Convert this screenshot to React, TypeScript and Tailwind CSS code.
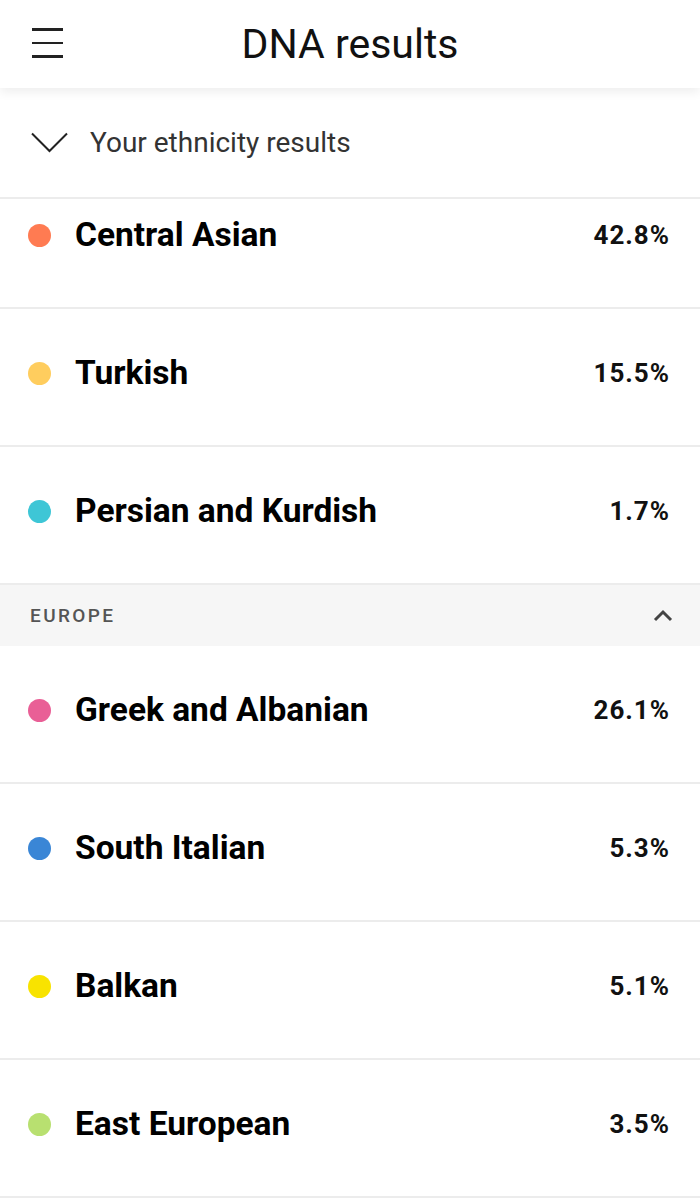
import React from "react";

type Item = { name: string; pct: string; color: string };

const asia: Item[] = [
  { name: "Central Asian", pct: "42.8%", color: "#ff7b52" },
  { name: "Turkish", pct: "15.5%", color: "#ffcd5e" },
  { name: "Persian and Kurdish", pct: "1.7%", color: "#3ec6d6" },
];

const europe: Item[] = [
  { name: "Greek and Albanian", pct: "26.1%", color: "#e95f96" },
  { name: "South Italian", pct: "5.3%", color: "#3a86d6" },
  { name: "Balkan", pct: "5.1%", color: "#f8e300" },
  { name: "East European", pct: "3.5%", color: "#b8e070" },
];

function Row({ item, first }: { item: Item; first?: boolean }) {
  return (
    <div
      className={
        "flex h-[138px] items-center justify-between border-b-2 border-[#ececec] pb-[8px] pl-[28px] pr-[30px]" +
        (first ? " -mt-[28px]" : "")
      }
    >
      <div className="flex items-center">
        <span
          className="block h-[23px] w-[23px] rounded-full"
          style={{ backgroundColor: item.color }}
        />
        <span className="ml-[24px] text-[33.5px] font-bold leading-none text-black">
          {item.name}
        </span>
      </div>
      <span className="text-[26px] font-bold leading-none tracking-[1px] text-[#111]">
        {item.pct}
      </span>
    </div>
  );
}

export default function App() {
  return (
    <div
      className="flex h-[1200px] w-[700px] flex-col overflow-hidden bg-white"
      style={{ fontFamily: "Roboto, 'Noto Sans', sans-serif" }}
    >
      <header className="relative z-20 flex h-[88px] shrink-0 items-center bg-white shadow-[0_4px_10px_rgba(0,0,0,0.07)]">
        <div className="absolute left-[32px] top-[28px] flex w-[31px] flex-col gap-[11px]">
          <span className="block h-[2.5px] w-full bg-[#222]" />
          <span className="block h-[2.5px] w-full bg-[#222]" />
          <span className="block h-[2.5px] w-full bg-[#222]" />
        </div>
        <h1 className="w-full text-center text-[41px] font-normal leading-none text-[#111]">
          DNA results
        </h1>
      </header>
      <div className="relative z-10 flex h-[111px] shrink-0 items-center border-b-2 border-[#ececec] bg-white pl-[31px]">
        <svg width="37" height="21" viewBox="0 0 37 21" fill="none">
          <path d="M1 1.5 L18.5 19 L36 1.5" stroke="#222" strokeWidth="2" />
        </svg>
        <span className="ml-[22px] text-[28px] leading-none text-[#333]">
          Your ethnicity results
        </span>
      </div>
      <div className="flex-1 overflow-hidden">
        {asia.map((it, i) => (
          <Row key={it.name} item={it} first={i === 0} />
        ))}
        <div className="flex h-[61px] items-center justify-between bg-[#f6f6f6] pl-[30px] pr-[27px]">
          <span className="text-[19px] font-medium leading-none tracking-[2.4px] text-[#555]">
            EUROPE
          </span>
          <svg width="20" height="13" viewBox="0 0 20 13" fill="none">
            <path d="M2 11 L10 3 L18 11" stroke="#444" strokeWidth="3" />
          </svg>
        </div>
        {europe.map((it) => (
          <Row key={it.name} item={it} />
        ))}
      </div>
    </div>
  );
}
